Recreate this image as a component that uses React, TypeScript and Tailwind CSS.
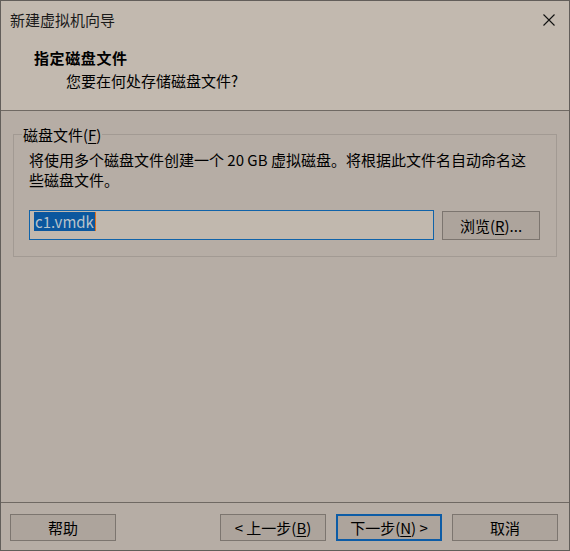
const FONT = "font-['Noto_Sans_CJK_SC','Noto_Sans',sans-serif]";

function Btn({ children, primary = false }: { children: React.ReactNode; primary?: boolean }) {
  return (
    <button
      className={
        primary
          ? 'flex h-[27px] w-[106px] items-center justify-center border-2 border-[#0d5ca6] bg-[#ada49c] text-[15px] leading-none text-black'
          : 'flex h-[27px] w-[106px] items-center justify-center border border-[#7c756f] bg-[#ada49c] text-[15px] leading-none text-black'
      }
    >
      {children}
    </button>
  );
}

export default function App() {
  return (
    <div
      className={`flex h-[551px] w-[570px] flex-col border border-[#625e5a] bg-[#b6ada5] text-[15px] text-black ${FONT}`}
    >
      {/* Header */}
      <div className="h-[110px] shrink-0 border-b border-[#6f6963] bg-[#c2b9af]">
        <div className="flex h-[37px] items-center justify-between pl-[9px] pr-[14px]">
          <span className="leading-[20px] text-[#1a1a1a]">新建虚拟机向导</span>
          <svg width="12" height="12" viewBox="0 0 12 12" className="text-[#111]">
            <path d="M0.5 0.5 L11.5 11.5 M11.5 0.5 L0.5 11.5" stroke="currentColor" strokeWidth="1.1" fill="none" />
          </svg>
        </div>
        <div className="mt-[10px] pl-[33px] font-bold leading-[20px] tracking-[0.6px]">指定磁盘文件</div>
        <div className="mt-[3px] pl-[65px] leading-[20px]">您要在何处存储磁盘文件?</div>
      </div>

      {/* Body */}
      <div className="flex-1 px-[12px] pt-[23px]">
        <div className="relative h-[123px] border border-[#a29a93] px-[15px] pt-[15px]">
          <span className="absolute left-[8px] top-[-10px] bg-[#b6ada5] px-[1px] leading-[20px]">
            磁盘文件(<span className="underline underline-offset-2">F</span>)
          </span>
          <p className="leading-[20px]">
            将使用多个磁盘文件创建一个 20 GB 虚拟磁盘。将根据此文件名自动命名这
            <br />
            些磁盘文件。
          </p>
          <div className="mt-[20px] flex items-start gap-[8px]">
            <div className="flex h-[30px] w-[405px] items-start border border-[#1063a9] bg-[#c1b8ae] pl-[4px] pt-[1px]">
              <span className="bg-[#0b579e] px-[1px] leading-[19px] text-[#b9c3ca]">c1.vmdk</span>
              <span className="h-[19px] w-[1px] bg-[#e0701c]" />
            </div>
            <button className="mt-[1px] flex h-[29px] w-[98px] items-center justify-center border border-[#7c756f] bg-[#ada49c] leading-none">
              浏览(<span className="underline underline-offset-2">R</span>)...
            </button>
          </div>
        </div>
      </div>

      {/* Footer */}
      <div className="flex h-[48px] shrink-0 items-start border-t border-[#6f6963] pl-[9px] pr-[11px] pt-[11px]">
        <Btn>帮助</Btn>
        <div className="flex-1" />
        <div className="flex gap-[10px]">
          <Btn>
            &lt; 上一步(<span className="underline underline-offset-2">B</span>)
          </Btn>
          <Btn primary>
            下一步(<span className="underline underline-offset-2">N</span>) &gt;
          </Btn>
          <Btn>取消</Btn>
        </div>
      </div>
    </div>
  );
}
